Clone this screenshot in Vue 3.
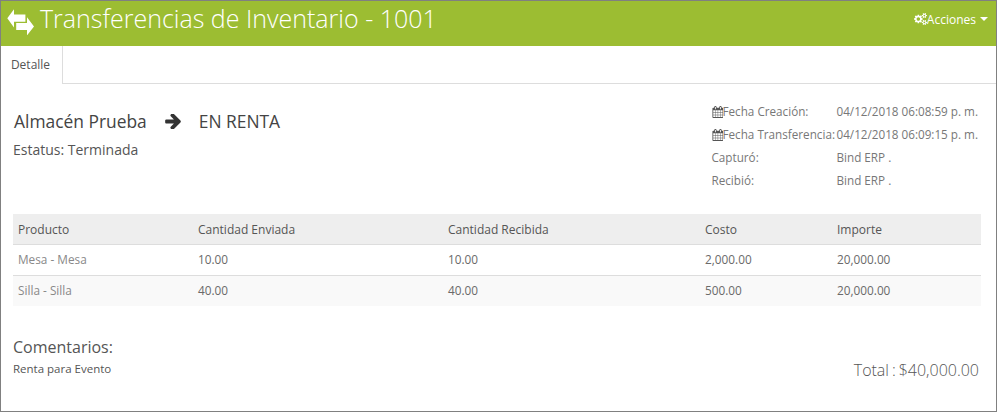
<script setup>
const rows = [
  { producto: 'Mesa - Mesa', enviada: '10.00', recibida: '10.00', costo: '2,000.00', importe: '20,000.00' },
  { producto: 'Silla - Silla', enviada: '40.00', recibida: '40.00', costo: '500.00', importe: '20,000.00' },
]
const calendar = 'M192 1664h288v-288h-288v288zm352 0h320v-288h-320v288zm-352-352h288v-320h-288v320zm352 0h320v-320h-320v320zm-352-384h288v-288h-288v288zm736 736h320v-288h-320v288zm-384-736h320v-288h-320v288zm768 736h288v-288h-288v288zm-384-352h320v-320h-320v320zm-352-864v-288q0-13-9.5-22.5t-22.5-9.5h-64q-13 0-22.5 9.5t-9.5 22.5v288q0 13 9.5 22.5t22.5 9.5h64q13 0 22.5-9.5t9.5-22.5zm736 864h288v-320h-288v320zm-384-384h320v-288h-320v288zm384 0h288v-288h-288v288zm32-480v-288q0-13-9.5-22.5t-22.5-9.5h-64q-13 0-22.5 9.5t-9.5 22.5v288q0 13 9.5 22.5t22.5 9.5h64q13 0 22.5-9.5t9.5-22.5zm384-64v1280q0 52-38 90t-90 38h-1408q-52 0-90-38t-38-90v-1280q0-52 38-90t90-38h128v-96q0-66 47-113t113-47h64q66 0 113 47t47 113v96h384v-96q0-66 47-113t113-47h64q66 0 113 47t47 113v96h128q52 0 90 38t38 90z'
const cogs = 'M896 896q0-106-75-181t-181-75-181 75-75 181 75 181 181 75 181-75 75-181zm768 512q0-52-38-90t-90-38-90 38-38 90q0 53 37.5 90.5t90.5 37.5 90.5-37.5 37.5-90.5zm0-1024q0-52-38-90t-90-38-90 38-38 90q0 53 37.5 90.5t90.5 37.5 90.5-37.5 37.5-90.5zm-384 421v185q0 10-7 19.5t-16 10.5l-155 24q-11 35-32 76 34 48 90 115 7 11 7 20 0 12-7 19-23 30-82.5 89.5t-78.5 59.5q-11 0-21-7l-115-90q-37 19-77 31-11 108-23 155-7 24-30 24h-186q-11 0-20-7.5t-10-17.5l-23-153q-34-10-75-31l-118 89q-7 7-20 7-11 0-21-8-144-133-144-160 0-9 7-19 10-14 41-53t47-61q-23-44-35-82l-152-24q-10-1-17-9.5t-7-19.5v-185q0-10 7-19.5t16-10.5l155-24q11-35 32-76-34-48-90-115-7-11-7-20 0-12 7-20 22-30 82-89t79-59q11 0 21 7l115 90q34-18 77-32 11-108 23-154 7-24 30-24h186q11 0 20 7.5t10 17.5l23 153q34 10 75 31l118-89q8-7 20-7 11 0 21 8 144 133 144 160 0 8-7 19-12 16-42 54t-45 60q23 48 34 82l152 23q10 2 17 10.5t7 19.5zm640 533v140q0 16-149 31-12 27-30 52 51 113 51 138 0 4-4 7-122 71-124 71-8 0-46-47t-52-68q-20 2-30 2t-30-2q-14 21-52 68t-46 47q-2 0-124-71-4-3-4-7 0-25 51-138-18-25-30-52-149-15-149-31v-140q0-16 149-31 13-29 30-52-51-113-51-138 0-4 4-7 4-2 35-20t59-34 30-16q8 0 46 46.5t52 67.5q20-2 30-2t30 2q51-71 92-112l6-2q4 0 124 70 4 3 4 7 0 25-51 138 17 23 30 52 149 15 149 31zm0-1024v140q0 16-149 31-12 27-30 52 51 113 51 138 0 4-4 7-122 71-124 71-8 0-46-47t-52-68q-20 2-30 2t-30-2q-14 21-52 68t-46 47q-2 0-124-71-4-3-4-7 0-25 51-138-18-25-30-52-149-15-149-31v-140q0-16 149-31 13-29 30-52-51-113-51-138 0-4 4-7 4-2 35-20t59-34 30-16q8 0 46 46.5t52 67.5q20-2 30-2t30 2q51-71 92-112l6-2q4 0 124 70 4 3 4 7 0 25-51 138 17 23 30 52 149 15 149 31z'
</script>

<template>
  <div class="frame">
    <header class="topbar">
      <div class="title-wrap">
        <svg class="ico-exchange" viewBox="7 9 27 26" fill="#fff" aria-hidden="true">
          <path d="M7.3 18.3 14 9.3V14.6H25.4V21.7H14V27.4Z" />
          <path d="M34 26.4 27 17.3V22.9H16.2V30H27V35.4Z" />
        </svg>
        <h1 class="title">Transferencias de Inventario - 1001</h1>
      </div>
      <div class="actions">
        <svg class="ico-cogs" viewBox="0 0 1920 1792" fill="#fff" aria-hidden="true"><path :d="cogs" /></svg>
        <span>Acciones</span>
        <span class="caret"></span>
      </div>
    </header>

    <nav class="tabs">
      <div class="tab">Detalle</div>
    </nav>

    <main class="content">
      <section class="summary">
        <div class="route-block">
          <div class="route">
            <span>Almacén Prueba</span>
            <svg class="ico-arrow" viewBox="128 256 1472 1408" fill="#333" aria-hidden="true"><path d="M1600 960q0 54-37 91l-651 651q-39 37-91 37-51 0-90-37l-75-75q-38-38-38-91t38-91l293-293h-704q-52 0-84.5-37.5t-32.5-90.5v-128q0-53 32.5-90.5t84.5-37.5h704l-293-294q-38-36-38-90t38-90l75-75q38-38 90-38 53 0 91 38l651 651q37 35 37 90z" /></svg>
            <span>EN RENTA</span>
          </div>
          <div class="status">Estatus: Terminada</div>
        </div>
        <dl class="info">
          <dt><svg class="ico-cal" viewBox="0 0 1664 1792" fill="#555" aria-hidden="true"><path :d="calendar" /></svg>Fecha Creación:</dt>
          <dd>04/12/2018 06:08:59 p. m.</dd>
          <dt><svg class="ico-cal" viewBox="0 0 1664 1792" fill="#555" aria-hidden="true"><path :d="calendar" /></svg>Fecha Transferencia:</dt>
          <dd>04/12/2018 06:09:15 p. m.</dd>
          <dt>Capturó:</dt>
          <dd>Bind ERP .</dd>
          <dt>Recibió:</dt>
          <dd>Bind ERP .</dd>
        </dl>
      </section>

      <table class="grid">
        <colgroup>
          <col class="c1" /><col class="c2" /><col class="c3" /><col class="c4" /><col class="c5" />
        </colgroup>
        <thead>
          <tr>
            <th>Producto</th><th>Cantidad Enviada</th><th>Cantidad Recibida</th><th>Costo</th><th>Importe</th>
          </tr>
        </thead>
        <tbody>
          <tr v-for="row in rows" :key="row.producto">
            <td class="muted">{{ row.producto }}</td>
            <td>{{ row.enviada }}</td>
            <td>{{ row.recibida }}</td>
            <td>{{ row.costo }}</td>
            <td>{{ row.importe }}</td>
          </tr>
        </tbody>
      </table>

      <section class="footer-row">
        <div>
          <h2 class="comments-title">Comentarios:</h2>
          <p class="comments">Renta para Evento</p>
        </div>
        <div class="total">Total : $40,000.00</div>
      </section>
    </main>
  </div>
</template>

<style>
html, body { margin: 0; background: #fff; }
</style>

<style scoped>
.frame {
  box-sizing: border-box;
  width: 997px;
  height: 412px;
  border: 1px solid #808080;
  display: flex;
  flex-direction: column;
  overflow: hidden;
  font-family: "Open Sans", "Noto Sans", sans-serif;
  color: #555;
  background: #fff;
}
.topbar {
  height: 45px;
  flex: none;
  background: #9cbd32;
  display: flex;
  align-items: flex-start;
  justify-content: space-between;
  color: #fff;
}
.title-wrap { display: flex; align-items: flex-start; padding-left: 6px; }
.ico-exchange { width: 27px; height: 26px; margin: 8px 6px 0 0; flex: none; }
.title {
  margin: 0;
  font-size: 25px;
  font-weight: 300;
  line-height: 34px;
}
.actions {
  display: flex;
  align-items: center;
  height: 36px;
  font-size: 12px;
  padding-right: 8px;
}
.ico-cogs { width: 13px; height: 12px; flex: none; }
.caret {
  margin-left: 4px;
  border-top: 4px solid #fff;
  border-left: 4px solid transparent;
  border-right: 4px solid transparent;
}
.tabs {
  height: 38px;
  flex: none;
  box-sizing: border-box;
  border-bottom: 1px solid #ddd;
  display: flex;
}
.tab {
  width: 62px;
  height: 38px;
  box-sizing: border-box;
  background: #fff;
  border-right: 1px solid #ddd;
  padding-right: 2px;
  font-size: 12px;
  line-height: 37px;
  text-align: center;
  color: #555;
}
.content { padding: 0 15px 0 12px; flex: 1; display: flex; flex-direction: column; }
.summary { display: flex; justify-content: space-between; height: 130px; }
.route-block { padding: 25px 0 0 1px; }
.route {
  display: flex;
  align-items: center;
  font-size: 17.4px;
  line-height: 24px;
  color: #444;
}
.ico-arrow { width: 16px; height: 15px; margin: 0 18px 0 18px; flex: none; }
.status { margin-top: 8px; font-size: 14px; line-height: 18px; color: #555; margin-left: -1px; }
.info {
  margin: 16px 3px 0 0;
  display: grid;
  grid-template-columns: 125px auto;
  grid-auto-rows: 23px;
  font-size: 11.7px;
  line-height: 23px;
  color: #777;
}
.info dt, .info dd { margin: 0; white-space: nowrap; }
.info dt { display: flex; align-items: center; }
.ico-cal { width: 11px; height: 12px; flex: none; }
.grid {
  width: 968px;
  table-layout: fixed;
  border-collapse: separate;
  border-spacing: 0;
  font-size: 11.8px;
  color: #6a6a6a;
}
.c1 { width: 180px; }
.c2 { width: 250px; }
.c3 { width: 257px; }
.c4 { width: 132px; }
.c5 { width: 149px; }
.grid th {
  height: 31px;
  padding: 0 5px;
  box-sizing: border-box;
  background: #eee;
  border-bottom: 1px solid #ddd;
  text-align: left;
  font-size: 12px;
  font-weight: 400;
  color: #555;
}
.grid td {
  height: 31px;
  padding: 0 5px 2px;
  box-sizing: border-box;
  border-bottom: 1px solid #ddd;
}
.grid tbody tr:nth-child(even) td { background: #f9f9f9; }
.grid tbody tr:last-child td { height: 30px; border-bottom: 0; }
.muted { color: #888; }
.footer-row {
  display: flex;
  justify-content: space-between;
  align-items: flex-end;
  margin-top: 31px;
  padding-right: 2px;
}
.comments-title { margin: 0; font-size: 16px; font-weight: 400; line-height: 20px; color: #555; }
.comments { margin: 4px 0 0; font-size: 11.5px; line-height: 15px; color: #555; }
.total { font-size: 16px; font-weight: 300; line-height: 20px; color: #555; margin-bottom: -4px; word-spacing: -1.2px; }
</style>
